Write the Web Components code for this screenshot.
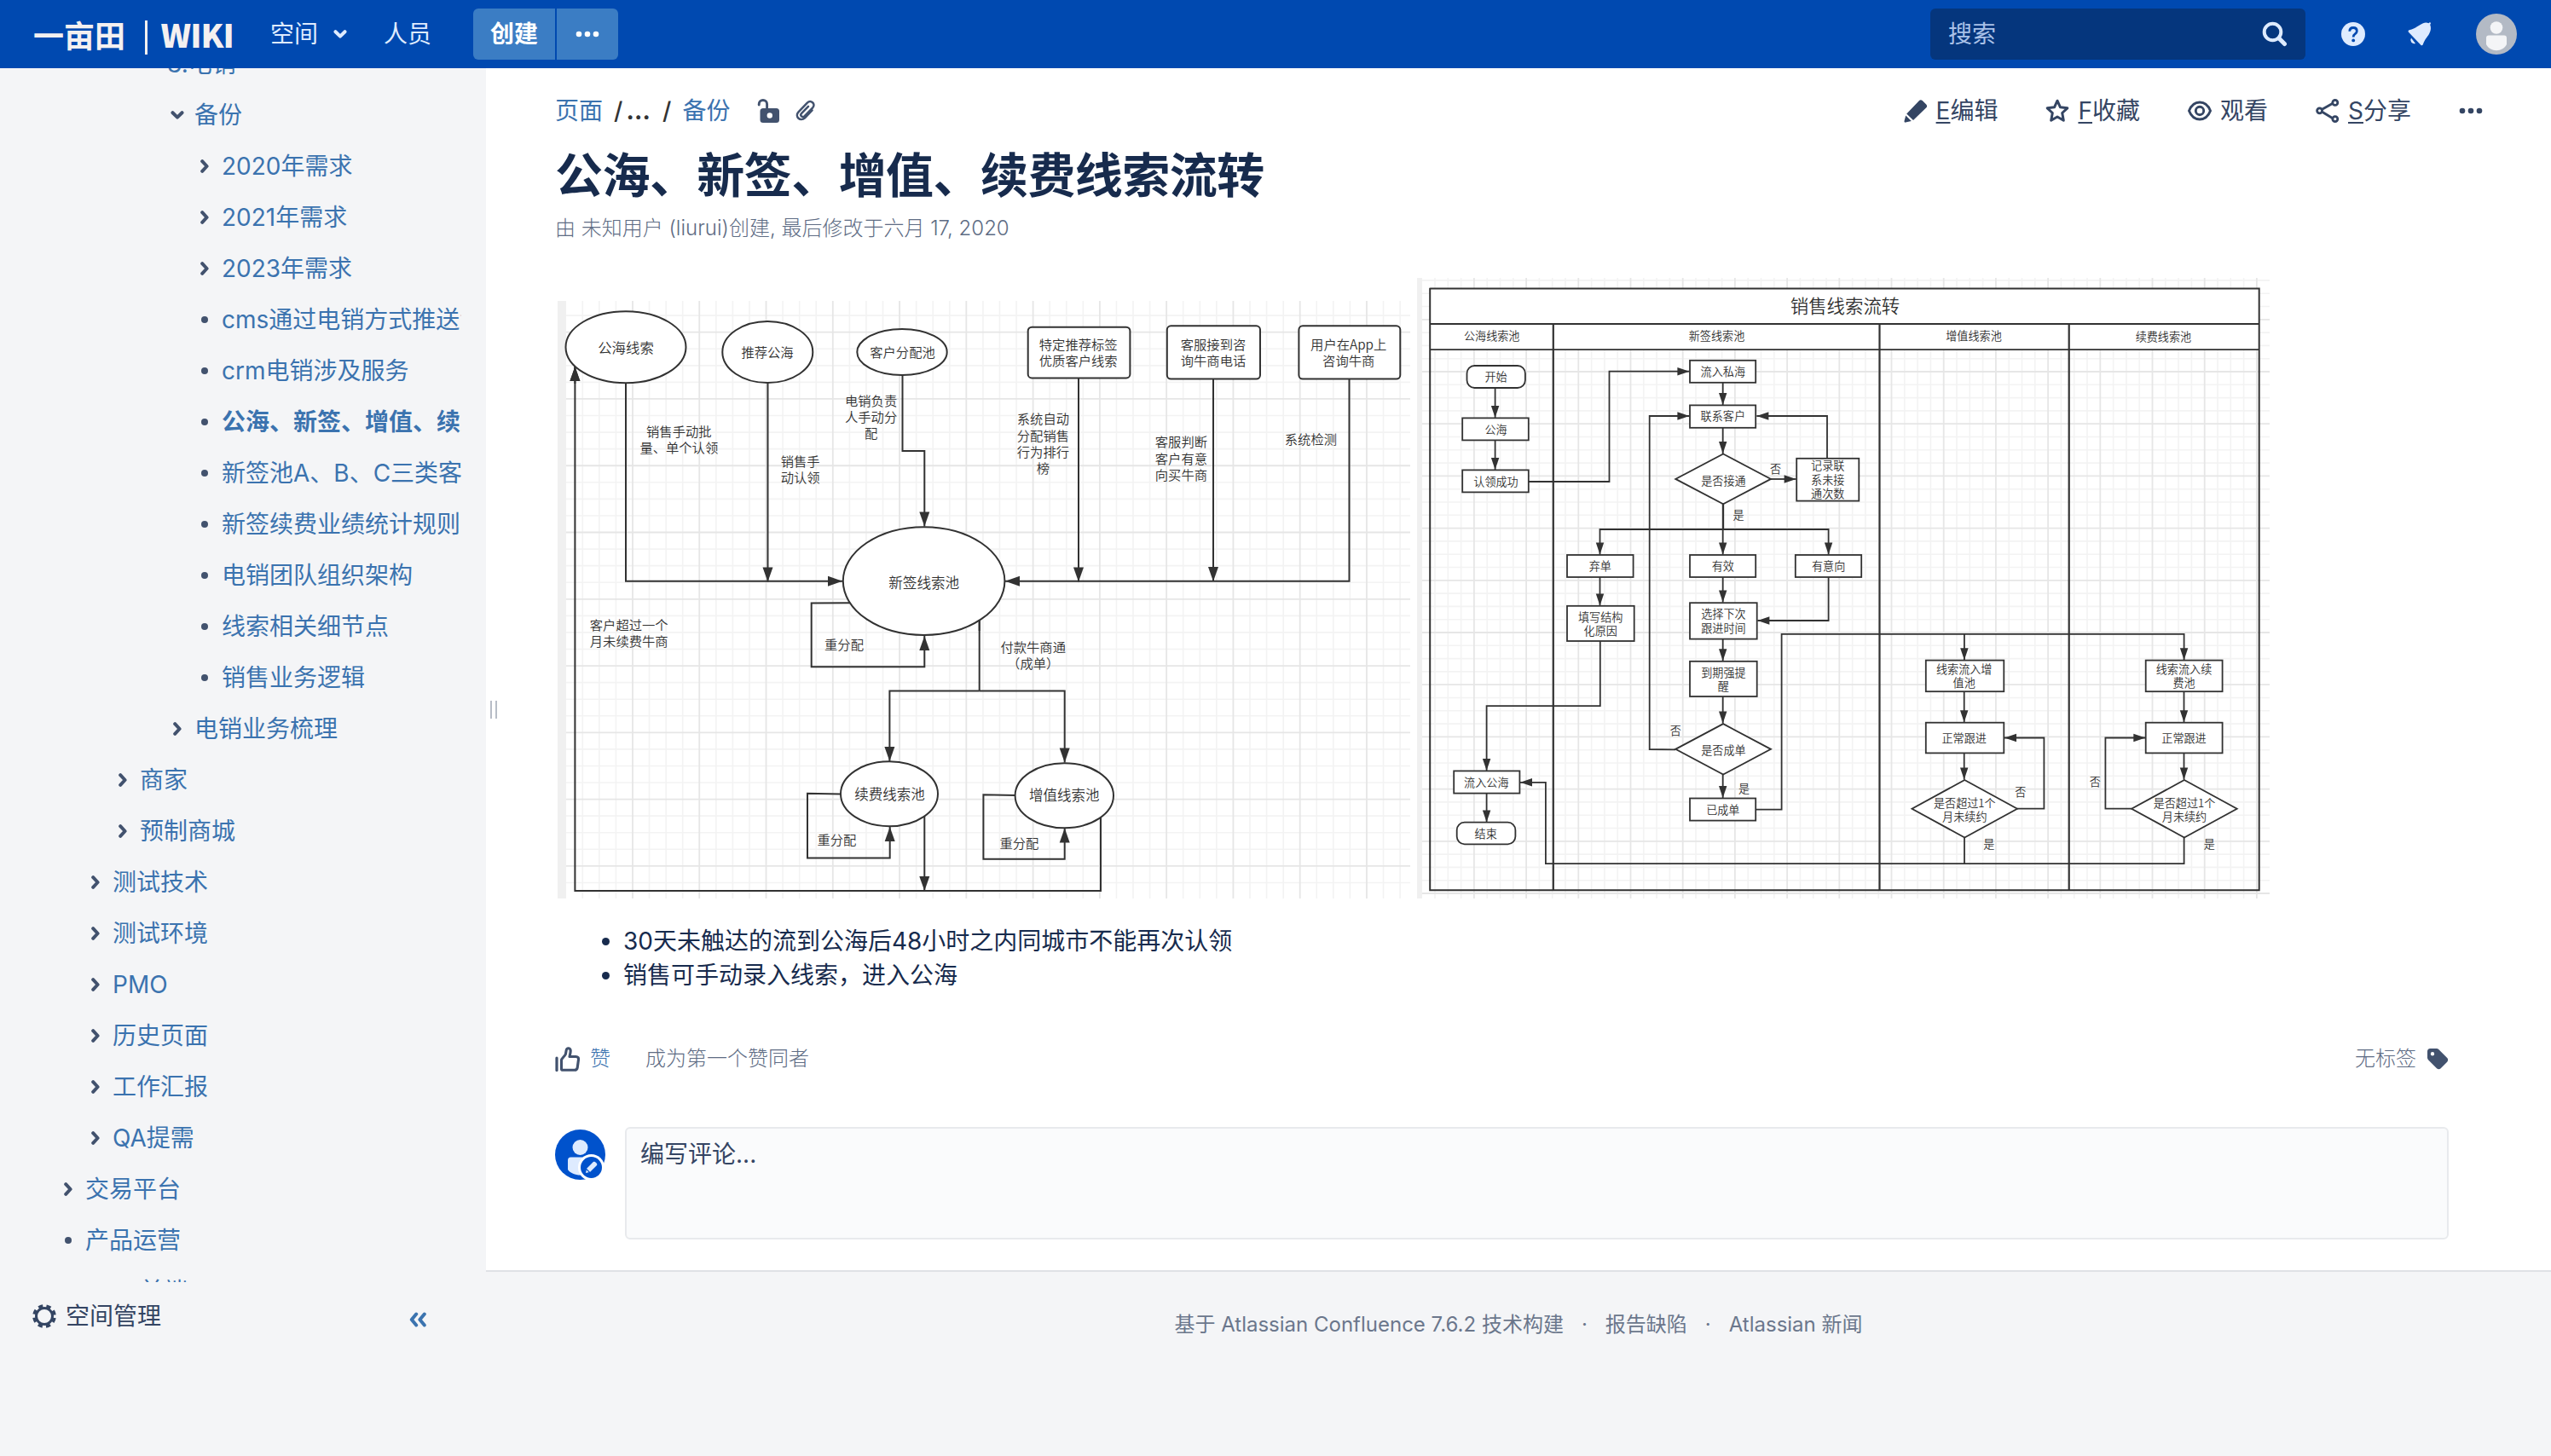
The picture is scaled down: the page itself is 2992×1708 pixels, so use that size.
<!DOCTYPE html>
<html lang="zh-CN">
<head>
<meta charset="utf-8">
<title>公海、新签、增值、续费线索流转</title>
<style>
html,body{margin:0;padding:0}
body{width:2992px;height:1708px;overflow:hidden;background:#f4f5f7;font-family:Inter,"Noto Sans CJK SC",sans-serif;font-size:28px;color:#172b4d}
</style>
</head>
<body>
<wiki-app></wiki-app>
<script>
const define=(name,html,setup)=>customElements.define(name,class extends HTMLElement{
  constructor(){super();this.attachShadow({mode:'open'});}
  connectedCallback(){
    this.shadowRoot.innerHTML=typeof html==='function'?html(this):html;
    if(setup)setup(this);
  }
});

/* ---------- icons ---------- */
const ICONS={
  down:[16,10,'<path d="M2.5 2.2 8 7.6l5.500-5.400" fill="none" stroke="currentColor" stroke-width="4" stroke-linecap="round" stroke-linejoin="round"/>'],
  right:[10,16,'<path d="M2.200 2.200 7.600 8l-5.400 5.800" fill="none" stroke="currentColor" stroke-width="4" stroke-linecap="round" stroke-linejoin="round"/>'],
  dot:[8,8,'<circle cx="4" cy="4" r="4" fill="currentColor"/>'],
  dots:[28,8,'<g fill="currentColor"><circle cx="4" cy="4" r="3.300"/><circle cx="14" cy="4" r="3.300"/><circle cx="24" cy="4" r="3.300"/></g>'],
  search:[30,30,'<g fill="none" stroke="currentColor"><circle cx="12.500" cy="12.500" r="9.800" stroke-width="4"/><path d="m20 20 6.500 6.500" stroke-width="5" stroke-linecap="round"/></g>'],
  help:[28,28,'<circle cx="14" cy="14" r="14" fill="currentColor"/><path d="M9.800 10.800c0-2.700 1.800-4.300 4.300-4.300s4.200 1.600 4.200 3.900c0 1.700-1 2.600-2.200 3.500-1.200.8-1.900 1.500-1.900 3.100v.6" fill="none" stroke="#0049b0" stroke-width="2.800"/><circle cx="14.200" cy="21.400" r="1.900" fill="#0049b0"/>'],
  bell:[28,28,'<path d="M1 11.800C.2 10.800.6 9.600 1.700 9.300 10 7 12.500 3.500 18 1.200 20.500.2 22.600.3 24.500 1.300l.9-.9c.7-.5 1.900.5 1.500 1.400l-.7 1.100c1.400 3.600.9 7.100-1 10.600-2.600 4.700-5.400 6.700-7.400 12.800-.4 1.200-1.800 1.300-2.500.5z" fill="currentColor"/><path d="M4 18.500a4.300 4.300 0 0 0 5 6.400z" fill="currentColor"/>'],
  user:[48,48,'<circle cx="24" cy="24" r="24" fill="#b3bac5"/><circle cx="24" cy="16.500" r="7.300" fill="#f4f5f7"/><path d="M12 28.500a3 3 0 0 1 3-3h18a3 3 0 0 1 3 3V36c-2 4.500-7 7.200-12 7.200S14 40.500 12 36z" fill="#f4f5f7"/>'],
  me:[62,60,'<circle cx="29.500" cy="29.500" r="29.500" fill="#0052cc"/><circle cx="29.500" cy="21" r="9" fill="#deebff"/><path d="M15 36a3.500 3.500 0 0 1 3.500-3.500h22A3.500 3.500 0 0 1 44 36v11c-3 4-9 6.500-14.500 6.500S17.500 51 15 47z" fill="#deebff"/><circle cx="42.500" cy="44.500" r="15.500" fill="#fff"/><circle cx="42.500" cy="44.500" r="12.500" fill="#0052cc"/><path d="m36 51 1.200-5.200 7.600-7.800c1.600-1.500 5.600 2 4.200 3.900l-7.800 7.800z" fill="#deebff"/><path d="m36.800 46.500 3.700 3.600" stroke="#0052cc" stroke-width="1.200"/>'],
  pencil:[28,28,'<path d="M3.200 17.500 17.800 2.200c1-1.200 2.700-1.300 3.900-.2l4.500 4.400c1.200 1.200 1.200 2.700.1 3.900L11 25z" fill="currentColor"/><path d="M2.200 19.500 8.800 26l-6.700 1.600c-1 .2-1.800-.6-1.600-1.600z" fill="currentColor"/>'],
  star:[28,28,'<path d="m14 2.200 3.500 7.600 8.300 1-6.100 5.700 1.600 8.700-7.300-4.200-7.300 4.200 1.600-8.700-6.100-5.700 8.300-1z" fill="none" stroke="currentColor" stroke-width="3" stroke-linejoin="round"/>'],
  eye:[28,24,'<g fill="none" stroke="currentColor" stroke-width="2.900"><path d="M1.500 12C4 5.500 8.500 2 14 2s10 3.500 12.500 10C24 18.500 19.500 22 14 22S4 18.500 1.500 12z"/><circle cx="14" cy="12" r="4.700"/></g>'],
  share:[28,28,'<g fill="none" stroke="currentColor" stroke-width="2.800"><path d="m8 12 11.500-6.500M8 15.500l11.500 7"/><circle cx="4.600" cy="13.800" r="3"/><circle cx="22.800" cy="4.400" r="3"/><circle cx="22.800" cy="23.600" r="3"/></g>'],
  unlock:[28,28,'<path d="M2.200 7V6.200a4.700 4.700 0 0 1 9.400 0V13" fill="none" stroke="currentColor" stroke-width="2.900" stroke-linecap="round"/><path fill-rule="evenodd" d="M7 11h15.500a3.500 3.500 0 0 1 3.500 3.500v10a3.500 3.500 0 0 1-3.500 3.500H7a3.500 3.500 0 0 1-3.500-3.500v-10A3.500 3.500 0 0 1 7 11zm7.800 5.300a3.200 3.200 0 1 0 0 6.400 3.200 3.200 0 0 0 0-6.400z" fill="currentColor"/>'],
  clip:[24,26,'<path d="M19.500 12.500 11 21.300c-5.300 5-12.300-1.500-7.500-6.900L13.800 3.600c4.200-4 10.300 1.100 6.400 5.700l-9.500 9.800c-2.800 2.500-6-.6-3.500-3.300l7.800-8" fill="none" stroke="currentColor" stroke-width="2.500" stroke-linecap="round"/>'],
  like:[29,29,'<path d="M2 13v14.500" stroke="currentColor" stroke-width="3.200" stroke-linecap="round"/><path d="M7.500 26V15.500c0-2 4-4.500 4.900-7l.8-4.500c.7-3.400 5-2.900 5 .8 0 2.500-.8 5-1.200 6.700h7.500c2.300 0 3.300 1.600 3 3.600l-1.300 9.400c-.3 1.900-1.400 2.800-3.300 2.800H9.500c-1.200 0-2-.4-2-1.300z" fill="none" stroke="currentColor" stroke-width="3.100" stroke-linejoin="round"/>'],
  tag:[26,26,'<path fill-rule="evenodd" d="M1 4.500v7.300c0 .9.400 1.800 1 2.400l10 10c1.300 1.300 3.400 1.300 4.700 0l7.500-7.500c1.300-1.300 1.300-3.400 0-4.700l-10-10C13.600 1.400 12.700 1 11.800 1H4.500A3.500 3.500 0 0 0 1 4.500zM7 5a2.200 2.200 0 1 1 0 4.400A2.200 2.200 0 0 1 7 5z" fill="currentColor"/>'],
  gear:[28,28,'<circle cx="14" cy="14" r="9.500" fill="none" stroke="currentColor" stroke-width="3"/><circle cx="14" cy="14" r="12" fill="none" stroke="currentColor" stroke-width="3.800" stroke-dasharray="5.200 4.225" stroke-dashoffset="-2.110"/>'],
  collapse:[20,18,'<path d="M8.200 2.500 2.800 9l5.400 6.500M17.800 2.500 12.400 9l5.400 6.500" fill="none" stroke="currentColor" stroke-width="4" stroke-linecap="round" stroke-linejoin="round"/>']
};
define('wiki-icon',h=>{
  const [w,t,p]=ICONS[h.getAttribute('name')];
  return `<style>:host{display:block;flex:none;width:${w}px;height:${t}px}svg{display:block}</style><svg width="${w}" height="${t}" viewBox="0 0 ${w} ${t}">${p}</svg>`;
});

/* ---------- header ---------- */
define('wiki-header',`<style>
:host{display:flex;align-items:center;height:80px;background:#0049b0;color:#deebff;padding:0 40px 0 39px;box-sizing:border-box;flex:none;line-height:40px}
.logo{font:700 36px/40px "Noto Sans CJK SC",sans-serif;color:#f4f0f0;width:235px;margin-right:43px;white-space:nowrap;display:flex;align-items:center}
.logo i{width:5px;height:40px;background:#f4f0f0;margin:7px 16px 0 23px}
.logo b{font-size:38px;letter-spacing:-.9px}
.nav{display:flex;align-items:center;gap:18px;margin-right:43px}
.btn{display:flex;gap:2px;height:60px;margin-left:6px}
.btn div{background:#3b7dc4;display:flex;align-items:center;justify-content:center;color:#fff;font-weight:700}
.btn div:first-child{width:96px;border-radius:6px 0 0 6px}.btn div:last-child{width:72px;border-radius:0 6px 6px 0}
.search{margin-left:auto;width:440px;height:60px;box-sizing:border-box;padding:0 21px;border-radius:6px;background:#05367d;display:flex;align-items:center;justify-content:space-between;color:#a9c1e8}
.search wiki-icon{color:#deebff}
.ic{display:flex;align-items:center;margin-left:42px}
.ic wiki-icon:nth-child(2){margin:0 52px 0 50px}
</style>
<div class="logo">一亩田<i></i><b>WIKI</b></div>
<div class="nav">空间<wiki-icon name="down"></wiki-icon></div>
<div class="nav">人员</div>
<div class="btn"><div>创建</div><div><wiki-icon name="dots"></wiki-icon></div></div>
<div class="search">搜索<wiki-icon name="search"></wiki-icon></div>
<div class="ic"><wiki-icon name="help"></wiki-icon><wiki-icon name="bell"></wiki-icon><wiki-icon name="user"></wiki-icon></div>`);

/* ---------- page tree ---------- */
define('tree-item',h=>`<style>
:host{display:flex;align-items:center;height:60px;white-space:nowrap;color:#3b73af;line-height:40px;padding-left:${72+32*h.getAttribute('level')}px}
.m{width:16px;margin-right:12px;display:flex;justify-content:center;color:#42526e;flex:none}
:host([current]){font-weight:700}
</style><span class="m">${h.getAttribute('mark')?`<wiki-icon name="${h.getAttribute('mark')}"></wiki-icon>`:''}</span><span><slot></slot></span>`);

const TREE=[[3,'','3.电销'],[4,'down','备份'],[5,'right','2020年需求'],[5,'right','2021年需求'],[5,'right','2023年需求'],[5,'dot','cms通过电销方式推送消息'],[5,'dot','crm电销涉及服务'],[5,'dot','公海、新签、增值、续费线索流转',1],[5,'dot','新签池A、B、C三类客户'],[5,'dot','新签续费业绩统计规则'],[5,'dot','电销团队组织架构'],[5,'dot','线索相关细节点'],[5,'dot','销售业务逻辑'],[4,'right','电销业务梳理'],[2,'right','商家'],[2,'right','预制商城'],[1,'right','测试技术'],[1,'right','测试环境'],[1,'right','PMO'],[1,'right','历史页面'],[1,'right','工作汇报'],[1,'right','QA提需'],[0,'right','交易平台'],[0,'dot','产品运营'],[2,'','前端']];
define('wiki-sidebar',`<style>
:host{display:flex;flex-direction:column;width:570px;flex:none;background:#f4f5f7}
.tree{height:1424px;width:541px;overflow:hidden}
.list{margin-top:-35px}
.foot{display:flex;align-items:center;height:80px;padding:0 70px 0 38px;color:#344563;line-height:40px}
.foot wiki-icon:first-child{margin-right:11px}
.foot wiki-icon:last-child{margin:8px 0 0 auto;color:#3b73af}
</style>
<div class="tree"><div class="list">${TREE.map(([l,m,t,c])=>`<tree-item level="${l}" mark="${m}"${c?' current':''}>${t}</tree-item>`).join('')}</div></div>
<div class="foot"><wiki-icon name="gear"></wiki-icon>空间管理<wiki-icon name="collapse"></wiki-icon></div>`);

/* ---------- flow charts ---------- */
const INK='#323232';
class Chart{
  constructor(x,y,w,h,arrow,half,strip,sw){Object.assign(this,{x,y,w,h,arrow,half,strip,sw,out:''});}
  grid(majX,majY,step){
    const sub=step/4,x0=this.x+this.strip,x1=this.x+this.w,y1=this.y+this.h;
    this.out+=`<rect x="${this.x}" y="${this.y}" width="${this.w}" height="${this.h}" fill="#fff"/>`;
    const line=(v,major,vert)=>{this.out+=`<path d="${vert?`M${v} ${this.y}V${y1}`:`M${x0} ${v}H${x1}`}" stroke="${major?'#e6e6e6':'#f3f3f3'}" stroke-width="${major?1.8:1.6}"/>`;};
    for(const major of [false,true]){
      for(let k=-60;k<80;k++){
        if((k%4===0)!==major)continue;
        const vx=majX+k*sub,vy=majY+k*sub;
        if(vx>=x0&&vx<=x1)line(vx,major,true);
        if(vy>=this.y&&vy<=y1)line(vy,major,false);
      }
    }
    this.out+=`<rect x="${this.x}" y="${this.y}" width="${this.strip}" height="${this.h}" fill="#f0f0f0"/>`;
  }
  ell(cx,cy,rx,ry){this.out+=`<ellipse cx="${cx}" cy="${cy}" rx="${rx}" ry="${ry}" fill="#fff" stroke="${INK}" stroke-width="${this.sw}"/>`;}
  box(x0,y0,x1,y1,r=0){this.out+=`<rect x="${x0}" y="${y0}" width="${x1-x0}" height="${y1-y0}" rx="${r}" fill="#fff" stroke="${INK}" stroke-width="${this.sw}"/>`;}
  dia(x0,y0,x1,y1){const cx=(x0+x1)/2,cy=(y0+y1)/2;this.out+=`<path d="M${cx} ${y0}L${x1} ${cy}L${cx} ${y1}L${x0} ${cy}Z" fill="#fff" stroke="${INK}" stroke-width="${this.sw}"/>`;}
  line(pts,arrow=true,sw=this.sw){
    this.out+=`<path d="M${pts.map(p=>p.join(' ')).join('L')}" fill="none" stroke="${INK}" stroke-width="${sw}"/>`;
    if(arrow){
      const [ax,ay]=pts[pts.length-2],[bx,by]=pts[pts.length-1],d=Math.hypot(bx-ax,by-ay),ux=(bx-ax)/d,uy=(by-ay)/d,px=bx-ux*this.arrow,py=by-uy*this.arrow,h=this.half;
      this.out+=`<path d="M${bx} ${by}L${px-uy*h} ${py+ux*h}L${px+uy*h} ${py-ux*h}Z" fill="${INK}"/>`;
    }
  }
  text(cx,ys,lines,size){lines.split('|').forEach((t,i)=>{const y=[].concat(ys)[i];this.out+=`<text x="${cx}" y="${(y+size*.37).toFixed(1)}" font-size="${size}" text-anchor="middle">${t}</text>`;});}
  svg(){return `<style>:host{display:block;flex:none;width:${this.w}px;height:${this.h}px}svg{display:block}text{fill:${INK};font-family:"Noto Sans CJK SC",sans-serif;font-weight:350}</style><svg width="${this.w}" height="${this.h}" viewBox="${this.x} ${this.y} ${this.w} ${this.h}">${this.out}</svg>`;}
}

define('pool-chart',()=>{
  const c=new Chart(654,353,1000,701,17,6,10,2);
  c.grid(742,389.7,78.27);
  c.line([[734,449],[734,681.8],[988,681.8]]);
  c.line([[900.5,449],[900.5,682.500]]);
  c.line([[1058.5,440],[1058.5,529],[1084.3,529],[1084.3,617.5]]);
  c.line([[1265,443],[1265,682.5]]);c.line([[1423,444],[1423,682]]);
  c.line([[1582.5,444],[1582.5,681.8],[1179,681.8]]);
  c.line([[998,707.2],[951.7,707.6],[951.7,782.2],[1084.3,782.2],[1084.3,746]]);
  c.line([[1148.7,728],[1148.7,810.4]],false);
  c.line([[1148.7,810.4],[1043.4,810.4],[1043.4,893]]);
  c.line([[1148.7,810.4],[1248.7,810.4],[1248.7,894.5]]);
  c.line([[986,931.6],[947,930.8],[947,1006.4],[1043.7,1006.4],[1043.7,970]]);
  c.line([[1192,933],[1153.4,932.2],[1153.4,1007.8],[1248.7,1007.8],[1248.7,971.5]]);
  c.line([[1291,957],[1291,1045],[674.4,1045],[674.4,430]]);
  c.ell(734,407.2,70.5,42);c.ell(900.3,413,53,36);c.ell(1058,413,52.7,26.9);
  c.ell(1083.6,681.6,94.8,63.4);c.ell(1043,931.2,57,38);c.ell(1248.3,933.2,57.7,38);
  c.line([[1148.7,727],[1148.7,740]],false);c.line([[1084.3,957],[1084.3,1045]]);c.line([[1291,959],[1291,970]],false);
  c.line([[674.4,450],[674.4,430]]);
  c.box(1205.7,383.7,1325.4,443.4,4.500);c.box(1368.8,382.3,1478,444.6,4.500);c.box(1523.4,382.3,1642.3,444.6,4.500);
  c.text(734,408,'公海线索',16.4);c.text(900,413.5,'推荐公海',15.3);c.text(1058.5,413.500,'客户分配池',15.3);
  c.text(1264.7,[404.3,423.3],'特定推荐标签|优质客户线索',15.3);c.text(1423,[404.3,423.3],'客服接到咨|询牛商电话',15.3);c.text(1581.7,[404.3,423.3],'用户在App上|咨询牛商',15.3);
  c.text(1021.6,[470.3,489.7,508.7],'电销负责|人手动分|配',15.3);
  c.text(796.3,[506.3,525.3],'销售手动批|量、单个认领',15.3);c.text(938.7,[541.3,560.3],'销售手|动认领',15.3);
  c.text(1223.4,[491.7,511,530,549.3],'系统自动|分配销售|行为排行|榜',15.3);
  c.text(1385.4,[518.7,538,557],'客服判断|客户有意|向买牛商',15.3);c.text(1537.4,515.4,'系统检测',15.3);
  c.text(1083.7,683.7,'新签线索池',16.6);c.text(990,756,'重分配',15.3);
  c.text(1211.7,[759.3,778],'付款牛商通|（成单）',15.3);c.text(737.7,[733.7,752.6],'客户超过一个|月未续费牛商',15.3);
  c.text(1043.4,931.8,'续费线索池',16.5);c.text(1248.3,933.3,'增值线索池',16.5);
  c.text(981.4,985.2,'重分配',15.3);c.text(1195.4,989.3,'重分配',15.3);
  return c.svg();
});

define('lane-chart',()=>{
  const c=new Chart(1662,326,1000,728,14,4.7,6,1.8);
  c.grid(1728.9,374.8,61.2);
  c.out+=`<rect x="1677" y="338.6" width="972.7" height="71.600" fill="#fff"/>`;
  c.line([[1677.2,338.6],[2649.7,338.6],[2649.7,1044.2],[1677.2,1044.2],[1677.2,337.7]],false,2);
  c.line([[1677,380],[2649.7,380]],false);c.line([[1677,410.2],[2649.7,410.2]],false);
  for(const x of [1821.8,2204.5,2426.7])c.line([[x,380],[x,1044]],false,2.2);
  c.text(2164,358.7,'销售线索流转',21.4);
  [[1749.7,394.2,'公海线索池'],[2013.5,394.2,'新签线索池'],[2315,394.2,'增值线索池'],[2537.4,395.2,'续费线索池']].forEach(a=>c.text(...a,13.1));
  c.line([[1753.6,455],[1753.6,490]]);c.line([[1753.6,516],[1753.6,551]]);
  c.line([[1793,565],[1887.5,565],[1887.5,435.7],[1981.4,435.7]]);
  c.line([[2020.7,449],[2020.7,475]]);c.line([[2020.7,502],[2020.7,532]]);
  c.line([[1965,879.3],[1934.7,879],[1934.7,488],[1981.4,488]]);
  c.line([[2077,562],[2106.6,562]]);c.line([[2143,537],[2143,488],[2060.4,488]]);
  c.line([[2021,591],[2021,621]],false,2.3);
  c.line([[2021,621],[1876.5,621],[1876.5,650.6]]);c.line([[2020.7,621],[2020.7,650.6]]);c.line([[2020.7,621],[2144.6,621],[2144.6,650.6]]);
  c.line([[1876.5,677],[1876.5,710.4]]);c.line([[2020.7,677],[2020.7,706.6]]);c.line([[2144.6,677],[2144.6,728],[2061.4,728]]);
  c.line([[2020.7,750],[2020.7,775.3]]);c.line([[2020.7,817],[2020.7,848.6]]);c.line([[2020.7,908],[2020.7,936]]);
  c.line([[2059.5,949.7],[2089.6,949.7],[2089.6,743.9],[2561.6,743.9],[2561.6,774.3]]);c.line([[2303.9,743.9],[2303.9,774.3]]);
  c.line([[1876.8,752],[1876.8,828.1],[1743.6,828.1],[1743.6,904.1]]);c.line([[1743.6,930.7],[1743.6,964.4]]);
  c.line([[2561.6,982],[2561.6,1013.1],[1812.9,1013.1],[1812.9,917.8],[1783,917.8]]);c.line([[2304,982],[2304,1013]],false);
  for(const x of [2303.7,2561.5]){c.line([[x,811],[x,847.3]]);c.line([[x,883],[x,914.6]]);}
  c.line([[2366,948.7],[2397.4,948.7],[2397.4,865.5],[2351,865.5]]);c.line([[2500,948.7],[2469.4,948.7],[2469.4,865.5],[2516.3,865.5]]);
  c.box(1720.5,429,1788.9,455,9);c.box(1708.7,964.7,1777.4,990.3,9);
  [[1715.2,490.4,1792.8,516.4],[1715.2,551.4,1792.8,577.4],[1982,422.8,2059.2,448.8],[1982,475.4,2059.2,501.8],[2107.2,537.8,2180.3,587.6],[1838,651,1915.6,677],[1982,651,2059.2,677],[2105.8,651,2183.2,677],[1838,710.8,1916.7,752],[1982,707.2,2060.7,749.6],[1982,775.8,2060.7,817],[1982,936.5,2059.2,962.6],[1705.2,904.4,1782.4,930.6],[2258.8,774.6,2350.3,811.2],[2258.8,847.7,2350.3,883.4],[2516.7,774.6,2606.6,811.2],[2516.7,847.7,2606.6,883.4]].forEach(b=>c.box(...b));
  c.dia(1965.2,532.5,2077,591.3);c.dia(1965.2,849.1,2077,908.6);c.dia(2242.5,915,2366,982.5);c.dia(2500.1,915,2623.7,982.5);
  [[1754.5,442.6,'开始'],[1754.5,504,'公海'],[1754.5,565.200,'认领成功'],[2020.8,436.3,'流入私海'],[2020.8,488.5,'联系客户'],[2021.4,563.8,'是否接通'],[2082.5,550,'否'],[2039,604.6,'是'],[2143.7,[546,562.8,579.2],'记录联|系未接|通次数'],[1876.8,664.5,'弃单'],[2020.8,664.500,'有效'],[2144.6,664.500,'有意向'],[1877.2,[724,740.6],'填写结构|化原因'],[2021.4,[720.2,736.7],'选择下次|跟进时间'],[2021.4,[789,805.6],'到期强提|醒'],[2021.4,880,'是否成单'],[1965.4,857,'否'],[2045.5,924.8,'是'],[2020.8,950.4,'已成单'],[1743.3,918.2,'流入公海'],[1742.7,978.4,'结束'],
  [2303.700,[785,801.6],'线索流入增|值池'],[2303.700,866.2,'正常跟进'],[2304.3,[941.700,958.2],'是否超过1个|月未续约'],[2369.7,928.8,'否'],[2332.7,989.8,'是'],
  [2561.5,[785,801.6],'线索流入续|费池'],[2561.5,866.2,'正常跟进'],[2562,[941.7,958.2],'是否超过1个|月未续约'],[2457.4,917,'否'],[2591.4,989.8,'是']].forEach(a=>c.text(...a,13.1));
  return c.svg();
});

/* ---------- page content ---------- */
define('page-toolbar',`<style>
:host{display:flex;align-items:center;height:40px;line-height:40px;color:#344563;white-space:nowrap}
a{color:#3b73af}
.sep{color:#333;font-weight:500}
.acts{display:flex;align-items:center;margin-left:auto}
.acts wiki-icon{margin-right:10px}
.acts span{margin-right:56px}
.acts wiki-icon:last-child{margin:0}
u{text-decoration-thickness:2px;text-underline-offset:3px}
.ic{display:flex;gap:17px;margin-left:32px;color:#42526e;align-items:center}
</style>
<a>页面</a><span class="sep" style="margin-left:13px">/</span><span class="sep" style="margin-left:4px;letter-spacing:.2px;font-weight:700">...</span><span class="sep" style="margin:0 13px 0 14px">/</span><a>备份</a>
<div class="ic"><wiki-icon name="unlock"></wiki-icon><wiki-icon name="clip"></wiki-icon></div>
<div class="acts"><wiki-icon name="pencil"></wiki-icon><span><u>E</u>编辑</span><wiki-icon name="star"></wiki-icon><span><u>F</u>收藏</span><wiki-icon name="eye"></wiki-icon><span>观看</span><wiki-icon name="share"></wiki-icon><span><u>S</u>分享</span><wiki-icon name="dots"></wiki-icon></div>`);

define('like-bar',`<style>
:host{display:flex;align-items:center;height:40px;font-size:24px;font-weight:300;line-height:40px;color:#5e6c84}
a{color:#3b73af;margin:0 41px 0 12px}
.like{color:#42526e}
.tag{margin-left:auto;display:flex;align-items:center;gap:12px}.tag wiki-icon{color:#42526e}
</style><wiki-icon class="like" name="like"></wiki-icon><a>赞</a><span>成为第一个赞同者</span><span class="tag">无标签<wiki-icon name="tag"></wiki-icon></span>`);

define('comment-box',`<style>
:host{display:flex;height:132px}
wiki-icon{margin:3px 20px 0 0}
.in{flex:1;box-sizing:border-box;border:2px solid #e8eaed;border-radius:6px;background:#fafbfc;padding:10px 16px;line-height:40px;color:#344563}
</style><wiki-icon name="me"></wiki-icon><div class="in"><slot></slot></div>`);

define('wiki-page',`<style>
:host{display:flex;flex-direction:column;flex:1}
.page{display:flex;flex-direction:column;background:#fff;height:1412px;box-sizing:border-box;padding:30px 120px 0 81px;border-bottom:2px solid #dfe1e6}
page-toolbar{margin-right:-40px}
h1{margin:20px 0 0;font-size:56px;line-height:72px;font-weight:700;letter-spacing:-.56px;color:#172b4d}
.meta{font-size:24px;line-height:32px;margin-top:10px;color:#5e6c84;font-weight:300}
.pics{display:flex;align-items:flex-end;gap:8px;margin:42px 0 0 3px}
ul{margin:30px 0 0;padding:0 0 0 80px;line-height:40px}
like-bar{margin:58px 0 0}
comment-box{margin-top:60px}
.foot{display:flex;justify-content:center;gap:21px;margin-top:46px;font-size:24px;line-height:32px;color:#6b778c}
main{display:flex;min-height:0}
.grip{width:3px;height:20px;border:solid #c9cdd4;border-width:0 2px;margin-top:741px}
.col{flex:none}
</style>
<div class="page">
<page-toolbar></page-toolbar>
<h1>公海、新签、增值、续费线索流转</h1>
<div class="meta">由 未知用户 (liurui)创建, 最后修改于六月 17, 2020</div>
<div class="pics"><pool-chart></pool-chart><lane-chart></lane-chart></div>
<ul><li>30天未触达的流到公海后48小时之内同城市不能再次认领</li><li>销售可手动录入线索，进入公海</li></ul>
<like-bar></like-bar>
<comment-box>编写评论...</comment-box>
</div>
<div class="foot"><span>基于 Atlassian Confluence 7.6.2 技术构建</span><span>·</span><span>报告缺陷</span><span>·</span><span>Atlassian 新闻</span></div>`);

define('split-handle',`<style>
:host{display:block;position:absolute;left:575px;top:822px;width:4px;height:21px;border:solid #b8bdc7;border-width:0 2px}
</style>`);

define('wiki-app',`<style>
:host{display:flex;flex-direction:column;width:2992px;height:1708px;position:relative}
.body{display:flex;flex:1}
</style><wiki-header></wiki-header><div class="body"><wiki-sidebar></wiki-sidebar><wiki-page></wiki-page></div><split-handle></split-handle>`);
</script>
</body>
</html>
